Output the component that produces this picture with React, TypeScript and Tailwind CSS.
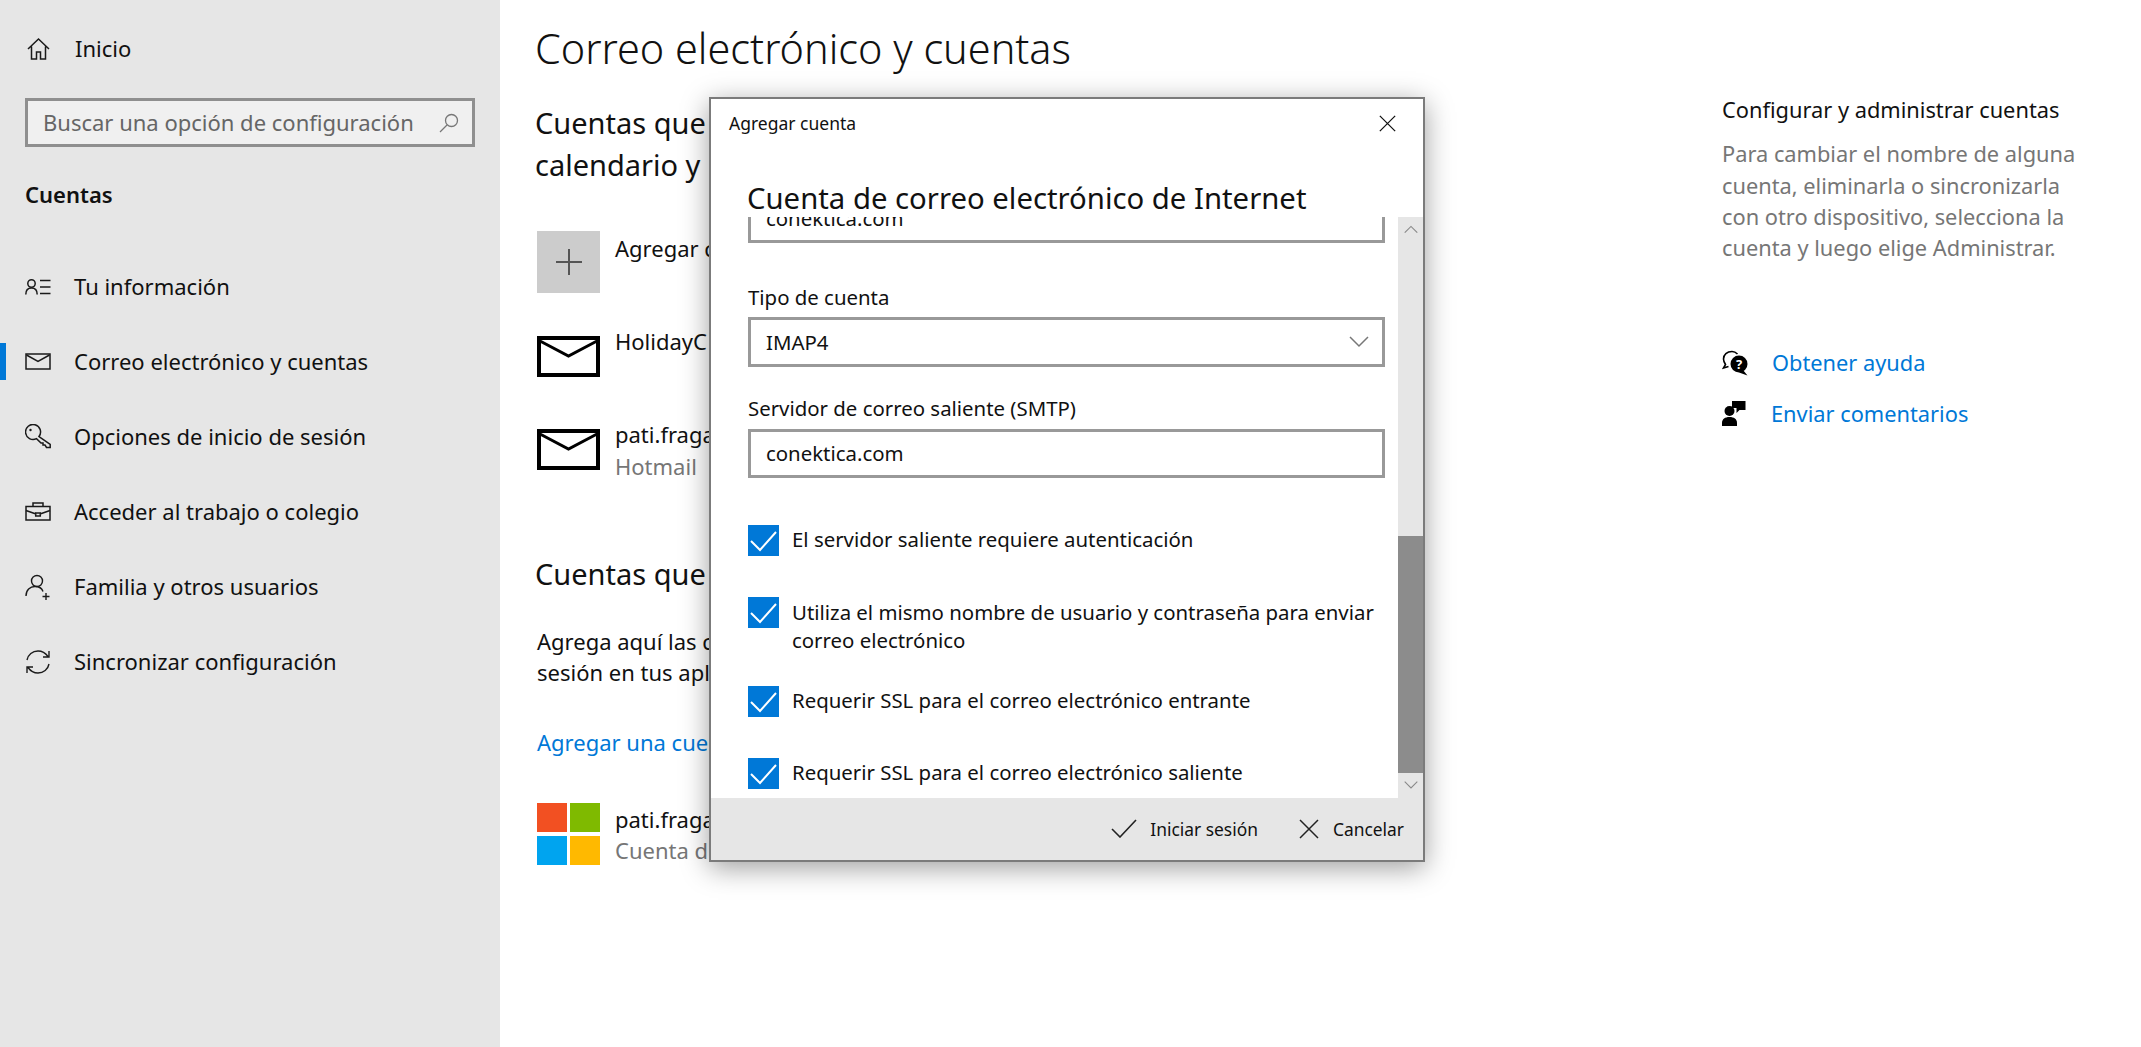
const font = { fontFamily: '"Noto Sans", "Open Sans", sans-serif' };

const Home = () => (
  <svg width="25" height="25" viewBox="0 0 25 25" fill="none" stroke="#1a1a1a" strokeWidth="1.5">
    <path d="M2 13 12.5 3 23 13M5.5 10.5V23h5v-7h4v7h5V10.5" />
  </svg>
);
const PersonList = () => (
  <svg width="26" height="16" viewBox="0 0 26 16" fill="none" stroke="#1a1a1a" strokeWidth="1.5">
    <circle cx="6.5" cy="4.5" r="3.7" />
    <path d="M.8 15.500c0-4 2.200-6.500 5.700-6.500s5.700 2.500 5.700 6.500M15 1.500h10.500M15 8h10.500M15 14.500h10.500" />
  </svg>
);
const SmallMail = () => (
  <svg width="26" height="17" viewBox="0 0 26 17" fill="none" stroke="#1a1a1a" strokeWidth="1.5">
    <rect x="1" y="1" width="24" height="15" />
    <path d="M1.500 2 13 8.500 24.500 2" />
  </svg>
);
const Key = () => (
  <svg width="26" height="26" viewBox="0 0 26 26" fill="none" stroke="#1a1a1a" strokeWidth="1.5">
    <path d="M14 12.500A7.500 7.500 0 1 0 11.500 14.600L16 19h2v2h2l1.500 2.500H25.200V20.500Z" />
    <circle cx="5.500" cy="6" r="1.200" fill="#1a1a1a" stroke="none" />
  </svg>
);
const Briefcase = () => (
  <svg width="26" height="19" viewBox="0 0 26 19" fill="none" stroke="#1a1a1a" strokeWidth="1.5">
    <rect x="1" y="4.500" width="24" height="13.500" />
    <path d="M8 4.500V1h10v3.500M1 8.500l10 3.500M25 8.500 15 12M10.700 11h4.600v3h-4.600z" />
  </svg>
);
const PersonAdd = () => (
  <svg width="26" height="26" viewBox="0 0 26 26" fill="none" stroke="#1a1a1a" strokeWidth="1.4">
    <circle cx="12" cy="7" r="5.500" />
    <path d="M1 22c0-6 4-9.500 9-9.500 4 0 7 2 8 5M21 19v7M17.500 22.500h7" />
  </svg>
);
const Sync = () => (
  <svg width="26" height="26" viewBox="0 0 26 26" fill="none" stroke="#1a1a1a" strokeWidth="1.4">
    <path d="M2 11C3 5.500 7.500 2 13 2c4 0 7.500 2 10 5.500M24 15c-1 5.500-5.500 9-11 9-4 0-7.500-2-10-5.500M24 2v6h-6M2 24v-6h6" />
  </svg>
);
const Search = () => (
  <svg width="20" height="20" viewBox="0 0 20 20" fill="none" stroke="#777" strokeWidth="1.3">
    <circle cx="12.500" cy="7.500" r="6" />
    <path d="M8 12 1 19" />
  </svg>
);
const BigMail = () => (
  <svg width="63" height="41" viewBox="0 0 63 41" fill="none" stroke="#000">
    <rect x="2" y="2" width="59" height="37" strokeWidth="4" />
    <path d="M3 5 31.500 20 60 5" strokeWidth="3" />
  </svg>
);
const MsLogo = () => (
  <svg width="63" height="62" viewBox="0 0 63 62">
    <rect x="0" y="0" width="30" height="29" fill="#f25022" />
    <rect x="33" y="0" width="30" height="29" fill="#7fba00" />
    <rect x="0" y="33" width="30" height="29" fill="#00a4ef" />
    <rect x="33" y="33" width="30" height="29" fill="#ffb900" />
  </svg>
);
const BoxCheck = () => (
  <svg width="31" height="31" viewBox="0 0 31 31" fill="none" stroke="#fff" strokeWidth="2">
    <path d="M3 16l9 9L28 7" />
  </svg>
);
const SignInCheck = () => (
  <svg width="26" height="19" viewBox="0 0 26 19" fill="none" stroke="#222" strokeWidth="1.600">
    <path d="M1 10l8 8L25 1" />
  </svg>
);
const Close = ({ size, color }: { size: number; color: string }) => (
  <svg width={size} height={size} viewBox="0 0 20 20" fill="none" stroke={color} strokeWidth="1.500">
    <path d="M1 1l18 18M19 1 1 19" />
  </svg>
);
const Chevron = ({ up, size, color }: { up?: boolean; size: number; color: string }) => (
  <svg width={size} height={size * 0.6} viewBox="0 0 20 12" fill="none" stroke={color} strokeWidth="1.500">
    <path d={up ? "M1 11 10 2l9 9" : "M1 1l9 9 9-9"} />
  </svg>
);
const Help = () => (
  <svg width="26" height="26" viewBox="0 0 26 26">
    <path d="M10 1.500C5 1.500 1.500 4.500 1.500 9c0 2.500 1 4 2 5.500L1.500 18l5-1.500" fill="none" stroke="#000" strokeWidth="1.600" />
    <path d="M10 1.500c2.500 0 4 1 5.500 2.500" fill="none" stroke="#000" strokeWidth="1.600" />
    <circle cx="17" cy="14" r="8.500" fill="#000" />
    <path d="M21 20l4.500 5.500-8.500-3z" fill="#000" />
    <text x="17" y="19" textAnchor="middle" fontSize="13" fontWeight="700" fill="#fff" fontFamily="Noto Sans">?</text>
  </svg>
);
const Feedback = () => (
  <svg width="24" height="26" viewBox="0 0 24 26" fill="#000">
    <circle cx="7.500" cy="11" r="5" />
    <path d="M0 26v-3c0-4 3-6 7.500-6s7.500 2 7.500 6v3z" />
    <path d="M10 1h13.500v9h-6l-3 3V8H10z" />
  </svg>
);

const navItems = [
  { label: "Tu información", icon: <PersonList /> },
  { label: "Correo electrónico y cuentas", icon: <SmallMail />, active: true },
  { label: "Opciones de inicio de sesión", icon: <Key /> },
  { label: "Acceder al trabajo o colegio", icon: <Briefcase /> },
  { label: "Familia y otros usuarios", icon: <PersonAdd /> },
  { label: "Sincronizar configuración", icon: <Sync /> },
];

const checks = [
  { label: "El servidor saliente requiere autenticación", cls: "mt-[47px]", text: "" },
  { label: "Utiliza el mismo nombre de usuario y contraseña para enviar correo electrónico", cls: "mt-[41px]", text: "pt-[1px]" },
  { label: "Requerir SSL para el correo electrónico entrante", cls: "mt-[32px]", text: "" },
  { label: "Requerir SSL para el correo electrónico saliente", cls: "mt-[41px]", text: "" },
];

const App = () => {
  return (
    <div className="relative flex h-[1047px] w-full overflow-hidden bg-white text-[#111]" style={font}>
      <aside className="w-[500px] shrink-0 bg-[#e6e6e6]">
        <div className="flex h-[96px] items-center gap-[24px] pl-[26px] text-[22px]">
          <Home />
          <span>Inicio</span>
        </div>
        <div className="mx-[25px] mt-[2px] flex h-[49px] w-[450px] items-center justify-between border-[3px] border-[#8f8f8f] bg-[#f0f0f0] pl-[15px] pr-[13px] text-[22px] text-[#666]">
          <span>Buscar una opción de configuración</span>
          <Search />
        </div>
        <div className="flex h-[94px] items-center pl-[25px] text-[22px] font-semibold">Cuentas</div>
        <nav className="mt-[8px]">
          {navItems.map((item) => (
            <div key={item.label} className="relative flex h-[75px] items-center gap-[23px] pl-[25px] text-[22px]">
              {item.active && <div className="absolute left-0 top-[19px] h-[37px] w-[6px] bg-[#0078d7]" />}
              <div className="flex w-[26px] justify-center">{item.icon}</div>
              <span>{item.label}</span>
            </div>
          ))}
        </nav>
      </aside>

      <main className="w-[1222px] shrink-0 pl-[35px]">
        <h1 className="flex h-[96px] items-center text-[41.4px] font-light">Correo electrónico y cuentas</h1>
        <h2 className="mt-[6px] w-fit text-[29px] leading-[42px]">
          Cuentas que
          <br />
          calendario y
        </h2>
        <div className="mt-[45px] flex items-start gap-[15px] pl-[2px] text-[22px]">
          <div className="flex h-[62px] w-[63px] items-center justify-center bg-[#cccccc]">
            <svg width="26" height="26" viewBox="0 0 26 26" stroke="#555" strokeWidth="2">
              <path d="M13 0v26M0 13h26" />
            </svg>
          </div>
          <span className="leading-[34px]">Agregar cuenta</span>
        </div>
        <div className="mt-[31px] flex items-start gap-[15px] pl-[2px] text-[22px]">
          <div className="mt-[12px]"><BigMail /></div>
          <span className="leading-[34px]">HolidayC</span>
        </div>
        <div className="mt-[41px] flex items-start gap-[15px] pl-[2px] text-[22px]">
          <div className="mt-[11px]"><BigMail /></div>
          <div className="leading-[32px]">
            <div>pati.fraga</div>
            <div className="text-[#767676]">Hotmail</div>
          </div>
        </div>
        <h2 className="mt-[71px] w-fit text-[29px] leading-[42px]">Cuentas que</h2>
        <p className="mt-[31px] w-fit pl-[2px] text-[22px] leading-[31px]">
          Agrega aquí las c
          <br />
          sesión en tus apl
        </p>
        <a className="mt-[38px] block w-fit pl-[2px] text-[22px] leading-[32px] text-[#0078d7]">Agregar una cue</a>
        <div className="mt-[45px] flex items-start gap-[15px] pl-[2px] text-[22px]">
          <MsLogo />
          <div className="mt-[1px] leading-[31px]">
            <div>pati.fraga</div>
            <div className="text-[#767676]">Cuenta d</div>
          </div>
        </div>
      </main>

      <section className="pt-[94px] text-[21.8px] leading-[31.3px]">
        <div className="text-[#111]">Configurar y administrar cuentas</div>
        <p className="mt-[13px] text-[#767676]">
          Para cambiar el nombre de alguna
          <br />
          cuenta, eliminarla o sincronizarla
          <br />
          con otro dispositivo, selecciona la
          <br />
          cuenta y luego elige Administrar.
        </p>
        <div className="mt-[84px] flex items-center gap-[24px]">
          <Help />
          <a className="text-[#0078d7]">Obtener ayuda</a>
        </div>
        <div className="mt-[19px] flex items-center gap-[25px]">
          <Feedback />
          <a className="text-[#0078d7]">Enviar comentarios</a>
        </div>
      </section>

      {/* dialog */}
      <div className="absolute left-[709px] top-[97px] flex h-[765px] w-[716px] flex-col border-2 border-[#7b7b7b] bg-white shadow-[0_6px_26px_rgba(0,0,0,0.38)]">
        <div className="flex h-[118px] shrink-0 flex-col pl-[18px]">
          <div className="flex h-[48px] items-center justify-between pr-[27px] text-[17.5px]">
            <span>Agregar cuenta</span>
            <Close size={17} color="#111" />
          </div>
          <div className="mt-[33px] pl-[18px] text-[29.3px] leading-[36px]">Cuenta de correo electrónico de Internet</div>
        </div>
        <div className="flex min-h-0 flex-1">
          <div className="flex-1 overflow-hidden pl-[37px] pr-[13px] text-[20.4px]">
            <div className="-mt-[24px] flex h-[50px] items-center border-[3px] border-[#999] pl-[15px]">conektica.com</div>
            <div className="mt-[40px] leading-[28px]">Tipo de cuenta</div>
            <div className="mt-[6px] flex h-[50px] items-center justify-between border-[3px] border-[#999] pl-[15px] pr-[13px]">
              <span>IMAP4</span>
              <Chevron size={20} color="#777" />
            </div>
            <div className="mt-[27px] leading-[28px]">Servidor de correo saliente (SMTP)</div>
            <div className="mt-[7px] flex h-[49px] items-center border-[3px] border-[#999] pl-[15px]">conektica.com</div>
            {checks.map((c) => (
              <div key={c.label} className={`flex items-start gap-[13px] ${c.cls}`}>
                <div className="flex h-[31px] w-[31px] shrink-0 items-center justify-center bg-[#0078d7]">
                  <BoxCheck />
                </div>
                <span className={`leading-[28px] ${c.text}`}>{c.label}</span>
              </div>
            ))}
          </div>
          <div className="flex w-[25px] shrink-0 flex-col bg-[#e6e6e6]">
            <div className="flex h-[38px] items-start justify-center pt-[8px]"><Chevron up size={14} color="#888" /></div>
            <div className="mt-[281px] h-[237px] bg-[#8c8c8c]" />
            <div className="flex flex-1 items-center justify-center"><Chevron size={14} color="#888" /></div>
          </div>
        </div>
        <div className="flex h-[62px] shrink-0 items-center justify-end gap-[41px] bg-[#e6e6e6] pr-[19px] text-[17.4px]">
          <div className="flex items-center gap-[13px]">
            <SignInCheck />
            <span>Iniciar sesión</span>
          </div>
          <div className="flex items-center gap-[14px]">
            <Close size={20} color="#222" />
            <span>Cancelar</span>
          </div>
        </div>
      </div>
    </div>
  );
};

export default App;
